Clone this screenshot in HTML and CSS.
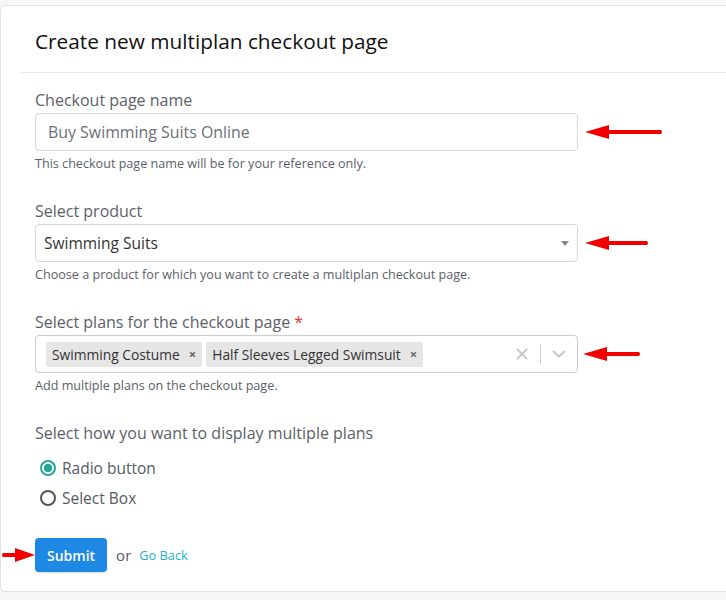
FILE: index.html
```html
<!DOCTYPE html>
<html>
<head>
<meta charset="utf-8">
<link rel="stylesheet" href="styles.css">
</head>
<body>
<div class="card">
  <div class="card-header">
    <h1 class="title">Create new multiplan checkout page</h1>
  </div>
  <div class="card-body">
    <div class="group">
      <label class="label">Checkout page name</label>
      <div class="field-wrap">
        <div class="input"><span class="input-text">Buy Swimming Suits Online</span></div>
        <svg class="arrow arrow-1" width="80" height="16" viewBox="0 0 80 16"><path d="M0 8 L24 1 L24 6 L76 6 Q78 8 76 10 L24 10 L24 15 Z" fill="#f20000"/></svg>
      </div>
      <div class="help">This checkout page name will be for your reference only.</div>
    </div>
    <div class="group">
      <label class="label">Select product</label>
      <div class="field-wrap">
        <div class="input select"><span class="select-text">Swimming Suits</span><span class="caret"></span></div>
        <svg class="arrow arrow-2" width="66" height="16" viewBox="0 0 66 16"><path d="M0 8 L24 1 L24 6 L62 6 Q64 8 62 10 L24 10 L24 15 Z" fill="#f20000"/></svg>
      </div>
      <div class="help">Choose a product for which you want to create a multiplan checkout page.</div>
    </div>
    <div class="group">
      <label class="label">Select plans for the checkout page <span class="req">*</span></label>
      <div class="field-wrap">
        <div class="input multi">
          <div class="tags">
            <span class="tag">Swimming Costume <span class="tag-x">×</span></span>
            <span class="tag">Half Sleeves Legged Swimsuit <span class="tag-x">×</span></span>
          </div>
          <div class="indicators">
            <svg class="ind-clear" width="14" height="14" viewBox="0 0 14 14"><path d="M2.5 2.5 L11.5 11.5 M11.5 2.5 L2.5 11.5" stroke="#c8c8c8" stroke-width="2" stroke-linecap="round"/></svg>
            <span class="ind-sep"></span>
            <svg class="ind-chev" width="16" height="16" viewBox="0 0 16 16"><path d="M2.5 5.5 L8 10.5 L13.5 5.5" stroke="#c8c8c8" stroke-width="2" fill="none" stroke-linecap="round" stroke-linejoin="round"/></svg>
          </div>
        </div>
        <svg class="arrow arrow-3" width="60" height="16" viewBox="0 0 60 16"><path d="M0 8 L24 1 L24 6 L56 6 Q58 8 56 10 L24 10 L24 15 Z" fill="#f20000"/></svg>
      </div>
      <div class="help">Add multiple plans on the checkout page.</div>
    </div>
    <div class="group radios">
      <label class="label radios-label">Select how you want to display multiple plans</label>
      <div class="radio-row"><span class="radio checked"></span><span class="radio-label">Radio button</span></div>
      <div class="radio-row"><span class="radio"></span><span class="radio-label">Select Box</span></div>
    </div>
    <div class="actions">
      <svg class="arrow arrow-4" width="34" height="16" viewBox="0 0 34 16"><path d="M34 8 L14 1 L14 6 L2 6 Q0 8 2 10 L14 10 L14 15 Z" fill="#f20000"/></svg>
      <button class="btn">Submit</button>
      <span class="or">or</span>
      <a class="back">Go Back</a>
    </div>
  </div>
</div>
</body>
</html>
```

FILE: styles.css
```css
html, body {
  margin: 0;
  padding: 0;
}
body {
  background: #f7f7f7;
  font-family: "Open Sans", Lato, "Liberation Sans", sans-serif;
  overflow: hidden;
  padding-top: 5px;
  height: 600px;
  box-sizing: border-box;
}
.card {
  background: #fff;
  border: 1px solid #e2e2e2;
  border-radius: 5px;
  width: 760px;
  height: 587px;
  box-sizing: border-box;
  padding: 0 20px;
}
.card-header {
  height: 66px;
  border-bottom: 1px solid #e6e6e6;
  display: flex;
  align-items: center;
  padding-left: 14px;
}
.title {
  margin: 0;
  font-size: 20.8px;
  font-weight: 500;
  color: #111;
  padding-top: 4px;
}
.card-body {
  padding: 17px 15px 0 14px;
}
.group {
  margin-bottom: 29px;
}
.label {
  display: block;
  font-size: 16px;
  line-height: 20px;
  color: #5b6168;
  margin-bottom: 3px;
}
.req {
  color: #e53935;
}
.field-wrap {
  position: relative;
  width: 543px;
}
.input {
  height: 38px;
  box-sizing: border-box;
  border: 1px solid #d9d9d9;
  border-radius: 4px;
  display: flex;
  align-items: center;
  background: #fff;
}
.input-text {
  padding-left: 12px;
  font-size: 15.9px;
  color: #6b7077;
}
.select {
  justify-content: space-between;
}
.select-text {
  padding-left: 8px;
  font-size: 15.5px;
  color: #333;
}
.caret {
  width: 0;
  height: 0;
  border-left: 4px solid transparent;
  border-right: 4px solid transparent;
  border-top: 5px solid #888;
  margin-right: 8px;
}
.multi {
  border-color: #cccccc;
  justify-content: space-between;
}
.tags {
  display: flex;
  gap: 4px;
  padding-left: 10px;
}
.tag {
  background: #e6e6e6;
  border-radius: 2px;
  height: 25px;
  display: flex;
  align-items: center;
  padding: 0 6px 0 6px;
  font-size: 13.8px;
  color: #333;
}
.tag-x {
  margin-left: 9px;
  font-size: 13px;
  color: #666;
  font-weight: 700;
}
.indicators {
  display: flex;
  align-items: center;
  padding-right: 10px;
}
.ind-clear {
  margin-right: 11px;
}
.ind-sep {
  width: 1px;
  height: 20px;
  background: #cccccc;
  margin-right: 10px;
}
.help {
  font-size: 12.6px;
  line-height: 17px;
  margin-top: 4px;
  color: #5b6168;
}
.arrow {
  position: absolute;
  top: 50%;
  transform: translateY(-50%);
}
.arrow-1 { left: 550px; }
.arrow-2 { left: 550px; }
.arrow-3 { left: 548px; }
.radios {
  margin-bottom: 25px;
}
.radios-label {
  margin-bottom: 10px;
}
.radio-row {
  height: 30px;
  display: flex;
  align-items: center;
  padding-left: 5px;
}
.radio {
  width: 16px;
  height: 16px;
  box-sizing: border-box;
  border: 2px solid #555;
  border-radius: 50%;
  margin-right: 6px;
  background: #fff;
}
.radio.checked {
  border-color: #26a69a;
  background: radial-gradient(circle, #26a69a 0 4px, #fff 4.5px);
}
.radio-label {
  font-size: 15.5px;
  color: #555b62;
}
.actions {
  position: relative;
  display: flex;
  align-items: center;
}
.arrow-4 {
  left: -34px;
}
.btn {
  background: #1e88e5;
  color: #fff;
  border: none;
  border-radius: 4px;
  height: 34px;
  padding: 0 12px;
  font-family: inherit;
  font-size: 14px;
  font-weight: 600;
  box-shadow: 0 1px 2px rgba(0,0,0,0.15);
}
.or {
  margin-left: 9px;
  font-size: 15px;
  color: #555b62;
}
.back {
  margin-left: 8px;
  font-size: 12.8px;
  color: #1eb3c4;
}
```
